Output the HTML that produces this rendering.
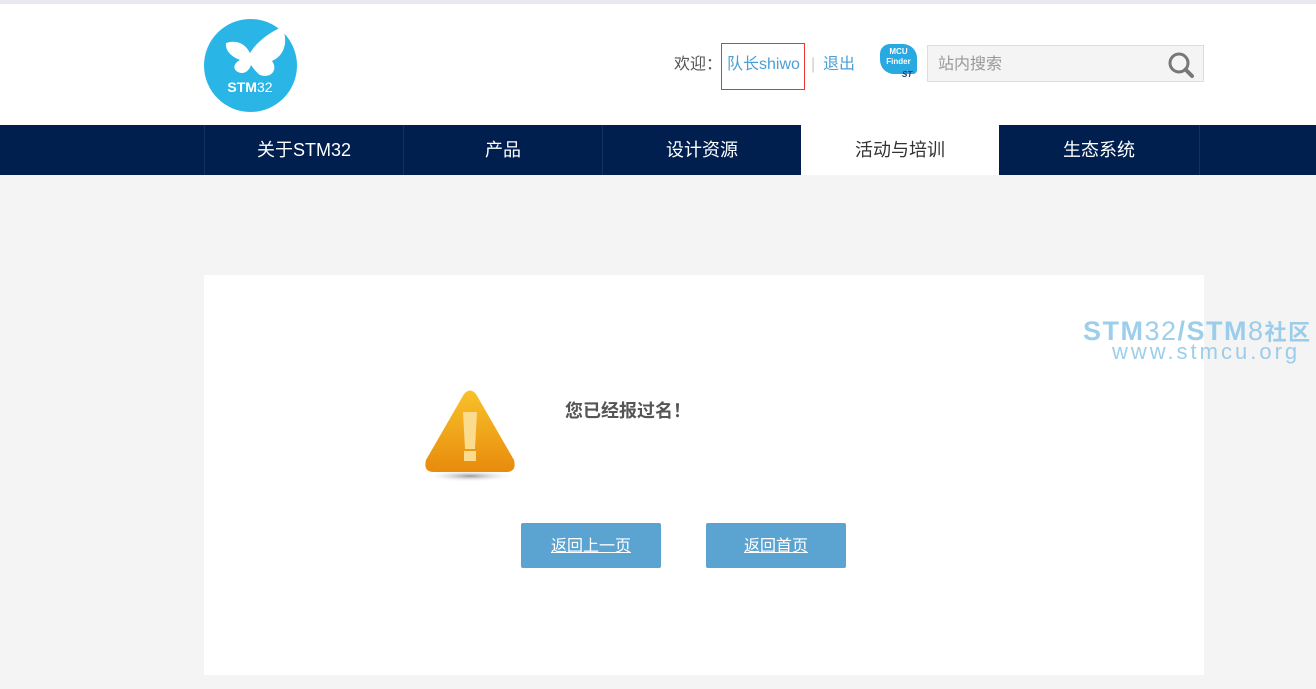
<!DOCTYPE html>
<html><head><meta charset="utf-8"><style>
body{margin:0;width:1316px;height:689px;overflow:hidden;background:#f4f4f4;font-family:"Liberation Sans","Noto Sans CJK SC",sans-serif;position:relative}
.top{position:absolute;left:0;top:0;width:1316px;height:125px;background:#fff;border-top:4px solid #e8e8ee;box-sizing:border-box}
.nav{position:absolute;left:0;top:125px;width:1316px;height:50px;background:#001f4f}
.nav div{position:absolute;top:0;height:50px;width:198px;border-left:1px solid #15325e;color:#fff;font-size:18px;line-height:50px;text-align:center}
.card{position:absolute;left:204px;top:275px;width:1000px;height:400px;background:#fff}
.btn{position:absolute;top:523px;width:140px;height:45px;background:#5ba4d2;color:#fff;text-decoration:underline;font-size:16px;line-height:47px;text-align:center;border-radius:2px}
</style></head><body>
<div class="top"></div>
<svg style="position:absolute;left:204px;top:19px" width="93" height="93" viewBox="0 0 93 93">
<circle cx="46.5" cy="46.5" r="46.5" fill="#29b6e6"/>
<path d="M22 24 C34 20 42 26 46 34 C52 24 64 14 78 8 C84 20 82 36 68 42 C74 50 68 60 56 56 C52 53 49 49 47 46 C45 52 40 56 34 53 C28 50 30 44 36 41 C28 38 21 32 22 24Z" fill="#fff"/>
<text x="46" y="73" text-anchor="middle" font-size="14" font-weight="bold" fill="#fff" font-family="Liberation Sans">STM<tspan font-weight="normal">32</tspan></text>
</svg>
<div style="position:absolute;left:674px;top:55px;font-size:16px;color:#555;line-height:20px">欢迎：</div>
<div style="position:absolute;left:721px;top:43px;width:82px;height:45px;border:1px solid #e33;"></div>
<div style="position:absolute;left:727px;top:55px;font-size:16px;color:#4a9fd6;line-height:20px">队长shiwo</div>
<div style="position:absolute;left:811px;top:55px;font-size:16px;color:#ccc;line-height:20px">|</div>
<div style="position:absolute;left:823px;top:55px;font-size:16px;color:#4a9fd6;line-height:20px">退出</div>
<div style="position:absolute;left:880px;top:44px;width:37px;height:30px;background:#29a9e1;border-radius:10px 14px 4px 14px;color:#fff;font-size:8px;font-weight:bold;text-align:center;line-height:10px;padding-top:3px;box-sizing:border-box">MCU<br>Finder</div>
<div style="position:absolute;left:902px;top:70px;font-size:8px;color:#1a3a7a;font-style:italic;font-weight:bold">ST</div>
<div style="position:absolute;left:927px;top:45px;width:277px;height:37px;background:#f4f4f4;border:1px solid #ddd;box-sizing:border-box"></div>
<div style="position:absolute;left:938px;top:55px;font-size:16px;color:#999;line-height:20px">站内搜索</div>
<svg style="position:absolute;left:1167px;top:51px" width="28" height="28" viewBox="0 0 28 28"><circle cx="12" cy="12" r="9" fill="none" stroke="#777" stroke-width="3"/><line x1="18.5" y1="18.5" x2="25" y2="25" stroke="#777" stroke-width="4" stroke-linecap="round"/></svg>
<div class="nav">
<div style="left:204px">关于STM32</div>
<div style="left:403px">产品</div>
<div style="left:602px">设计资源</div>
<div style="left:801px;background:#fff;color:#333;border-left:none">活动与培训</div>
<div style="left:1000px;border-left:none">生态系统</div>
<div style="left:1199px;width:0"></div>
</div>
<div class="card"></div>
<svg style="position:absolute;left:420px;top:388px" width="100" height="96" viewBox="0 0 100 96">
<defs><linearGradient id="g" x1="0" y1="0" x2="0" y2="1"><stop offset="0" stop-color="#f8c22a"/><stop offset="1" stop-color="#e88b0c"/></linearGradient>
<radialGradient id="s"><stop offset="0" stop-color="#999"/><stop offset="1" stop-color="#fff" stop-opacity="0"/></radialGradient></defs>
<ellipse cx="50" cy="88" rx="46" ry="6" fill="url(#s)"/>
<path d="M44 6 Q50 -1 56 6 L94 72 Q97 84 86 84 L14 84 Q3 84 6 72Z" fill="url(#g)"/>
<path d="M43 24 L57 24 L55 61 L45 61Z" fill="#fbdc8e"/><rect x="44" y="63" width="12" height="10" fill="#fbdc8e"/>
</svg>
<div style="position:absolute;left:565px;top:397px;font-size:18px;font-weight:bold;color:#555">您已经报过名！</div>
<div class="btn" style="left:521px">返回上一页</div>
<div class="btn" style="left:706px">返回首页</div>
<div style="position:absolute;left:1083px;top:315px;font-size:27px;font-weight:bold;color:#8cc6e8;opacity:.85;white-space:nowrap;letter-spacing:1.5px">STM<span style="font-weight:normal">32</span>/STM<span style="font-weight:normal">8</span><span style="font-size:22px">社区</span></div>
<div style="position:absolute;left:1112px;top:339px;font-size:22px;color:#8cc6e8;opacity:.85;letter-spacing:3px">www.stmcu.org</div>
</body></html>
